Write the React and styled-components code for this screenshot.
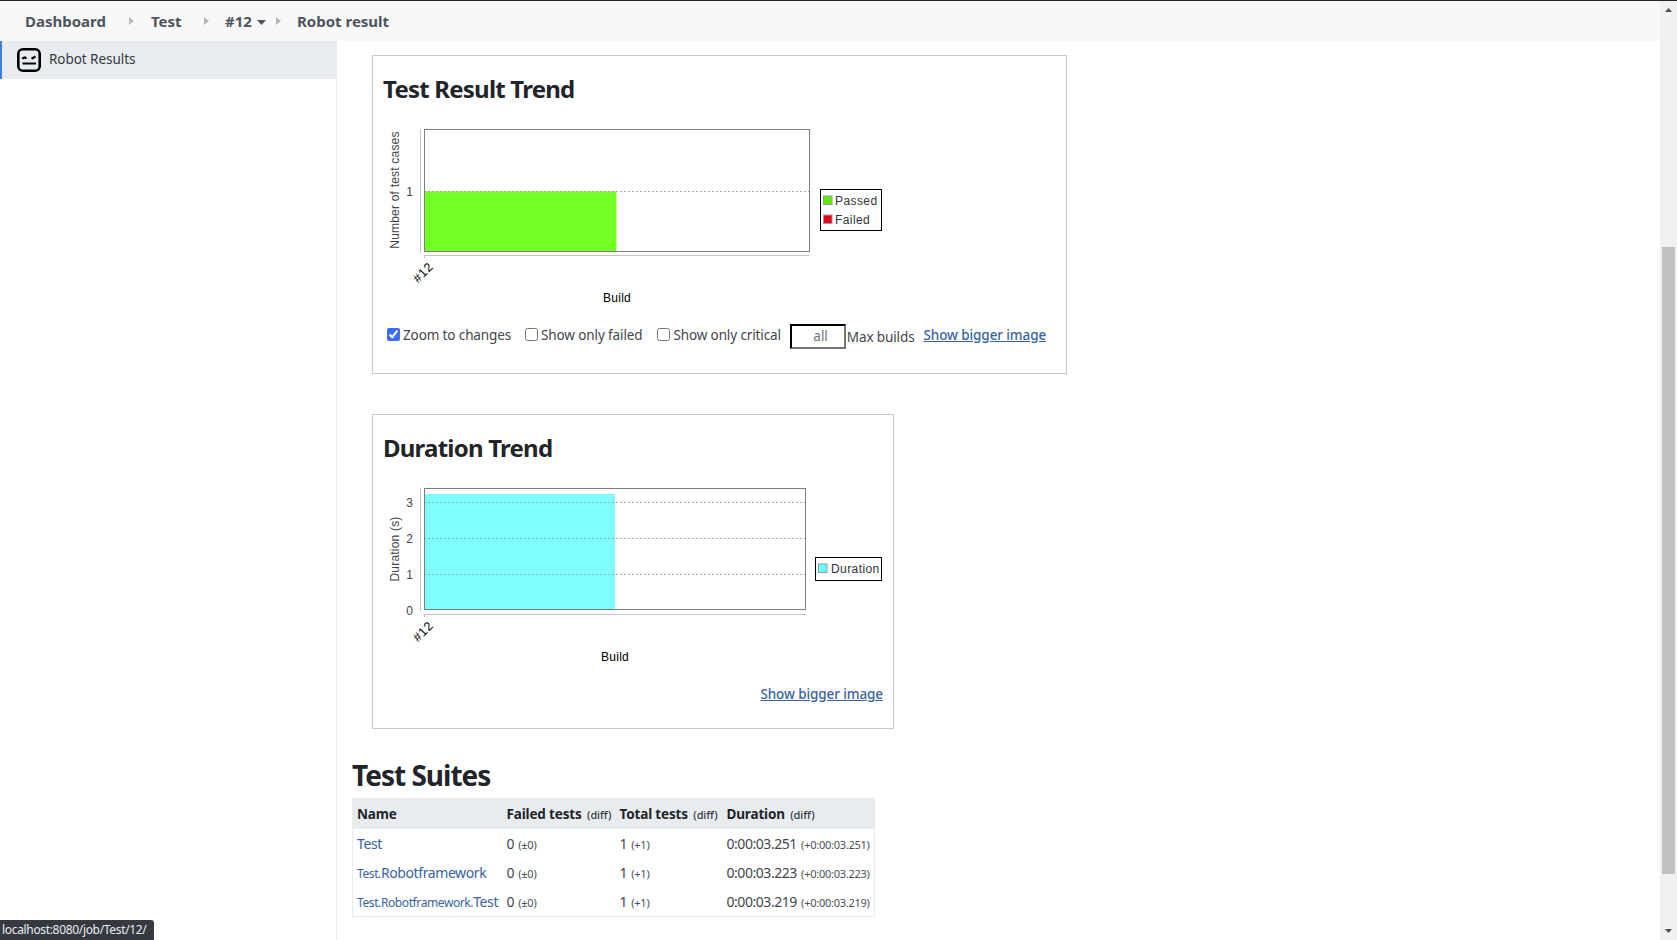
import React from "react";
import styled, { createGlobalStyle } from "styled-components";

const Global = createGlobalStyle`
  html, body { margin: 0; padding: 0; height: 100%; overflow: hidden; background: #fff; }
  body { font-family: "Noto Sans", "Open Sans", sans-serif; color: #212529; }
  * { box-sizing: border-box; }
`;

const Page = styled.div`
  display: grid;
  grid-template-columns: 1fr 17px;
  width: 1677px;
  height: 940px;
  border-top: 1px solid #212529;
  position: relative;
  overflow: hidden;
`;
const Content = styled.div`
  display: flex;
  flex-direction: column;
  min-width: 0;
`;
const Scrollbar = styled.div`
  background: #f1f1f1;
  padding: 246px 2px 66px;
  position: relative;
  display: flex;
`;
const Thumb = styled.div`
  flex: 1;
  background: #c1c1c1;
`;
const Arrow = styled.svg`
  position: absolute;
  left: 5px;
  width: 7px;
  height: 4px;
  top: ${(p) => p.$top}px;
`;
const Crumbs = styled.nav`
  height: 40px;
  background: #f8f8f8;
  display: flex;
  align-items: center;
  padding-left: 25px;
  font-size: 15px;
  font-weight: 700;
  color: #4d545d;
`;
const Crumb = styled.span`
  width: ${(p) => p.$w}px;
  flex: none;
  white-space: nowrap;
`;
const Sep = styled.svg`
  flex: none;
  width: 5px;
  height: 8px;
  margin-left: ${(p) => p.$ml}px;
  margin-right: ${(p) => p.$mr}px;
`;
const Caret = styled.svg`
  width: 9px;
  height: 5px;
  margin-left: 5px;
  vertical-align: 2px;
`;
const Body = styled.div`
  flex: 1;
  display: flex;
  min-height: 0;
`;
const Sidebar = styled.aside`
  width: 337px;
  flex: none;
  border-right: 1px solid #e9ecef;
`;
const SideItem = styled.div`
  height: 38px;
  background: #e9ecef;
  border-left: 2px solid #3d7fe0;
  display: flex;
  align-items: center;
  padding-left: 15px;
  gap: 8px;
  font-size: 13.5px;
  line-height: 36px;
  letter-spacing: -0.05px;
  color: #343a40;
`;
const SideLabel = styled.span`
  margin-top: -2px;
`;
const Main = styled.main`
  flex: 1;
  padding: 14px 0 0 15px;
`;
const Card = styled.section`
  width: ${(p) => p.$w}px;
  height: ${(p) => p.$h}px;
  margin: 0 0 ${(p) => p.$mb}px 20px;
  border: 1px solid #c8c8c8;
  padding: 0 10px;
`;
const CardTitle = styled.h2`
  margin: 0;
  height: 54px;
  padding-top: 16px;
  font-size: 24px;
  line-height: 33px;
  font-weight: 700;
  letter-spacing: -0.78px;
  color: #212529;
  white-space: nowrap;
`;
const ChartSvg = styled.svg`
  display: block;
  overflow: visible;
  font-family: "Liberation Sans", Arial, sans-serif;
`;
const Controls = styled.div`
  display: flex;
  align-items: center;
  height: 28px;
  margin-top: 11px;
  padding-left: 4px;
  font-size: 13.5px;
  letter-spacing: -0.12px;
  color: #3f464c;
  white-space: nowrap;
`;
const Check = styled.label`
  display: flex;
  align-items: center;
  gap: 3px;
  margin-right: ${(p) => p.$mr}px;
`;
const Box = styled.input`
  width: 13px;
  height: 13px;
  margin: -2px 0 0 0;
  accent-color: #3e6cf0;
`;
const MaxInput = styled.input`
  width: 56px;
  height: 25px;
  border: 2px inset #767676;
  border-color: #2b2b2b #767676 #767676 #2b2b2b;
  padding: 0 16px 0 0;
  margin: 2px 1px 0 0;
  text-align: right;
  font: inherit;
  color: #6c757d;
  background: #fff;
`;
const MaxLabel = styled.span`
  margin-top: 4px;
  margin-right: 9px;
`;
const BigLink = styled.a`
  color: #38639f;
  text-decoration: underline;
  font-weight: 500;
  font-size: 13.5px;
  letter-spacing: -0.1px;
`;
const LinkRow = styled.div`
  display: flex;
  justify-content: flex-end;
  height: 24px;
  margin-top: 13px;
  align-items: center;
`;
const SectionTitle = styled.h1`
  margin: 0 0 4px;
  font-size: 28px;
  line-height: 38px;
  font-weight: 700;
  letter-spacing: -1px;
`;
const Table = styled.table`
  width: 522px;
  table-layout: fixed;
  border-collapse: collapse;
  border: 1px solid #e9ecef;
  font-size: 14px;
  letter-spacing: -0.45px;
`;
const Th = styled.th`
  width: ${(p) => p.$w}px;
  height: 30px;
  background: #e9ecef;
  text-align: left;
  padding: 0 0 0 5px;
  font-size: 13.5px;
  font-weight: 700;
  letter-spacing: -0.15px;
  white-space: nowrap;
  &:first-child { padding-left: 4px; }
`;
const Td = styled.td`
  height: ${(p) => p.$h}px;
  padding: 0 0 0 5px;
  color: #3f464c;
  white-space: nowrap;
  &:first-child { letter-spacing: -0.4px; padding-left: 4px; }
`;
const Diff = styled.small`
  font-size: 11px;
  font-weight: 400;
  margin-left: 1px;
  color: #495057;
  letter-spacing: -0.25px;
`;
const HeadDiff = styled(Diff)`
  font-weight: 500;
  color: #343a40;
  margin-left: 2px;
  letter-spacing: -0.1px;
`;
const SuiteLink = styled.a`
  color: #38639f;
  text-decoration: none;
`;
const Parent = styled.span`
  font-size: 12px;
`;
const Tooltip = styled.div`
  position: absolute;
  left: 0;
  bottom: 0;
  width: 154px;
  height: 20px;
  padding-left: 2px;
  background: #343a40;
  border-top-right-radius: 3px;
  color: #e9ecef;
  font-size: 12px;
  line-height: 20px;
  letter-spacing: -0.33px;
  white-space: nowrap;
`;

const RobotIcon = () => (
  <svg width="24" height="24" viewBox="0 0 24 24" fill="none" stroke="#000">
    <rect x="1.3" y="1.3" width="21.4" height="21.4" rx="4.5" strokeWidth="2.6" />
    <path d="M5.5 11c1-2 2.8-2 3.8-.2M18.5 8.5l-4 2.2M5.5 15.5h13.5" strokeWidth="2.2" />
  </svg>
);

const Chevron = ({ ml, mr }) => (
  <Sep $ml={ml} $mr={mr} viewBox="0 0 5 8"><path d="M0 0l5 4-5 4z" fill="#b5b9bd" /></Sep>
);

const Chart = ({ right, barRight, barTop, bottom, top, axisY, ticks, color, yLabel, labelY, legend, legendBox, buildX }) => (
  <ChartSvg width="520" height="200">
    <g fontSize="12" fill="#444">
      <text transform={`translate(16 ${labelY}) rotate(-90)`} textAnchor="middle" letterSpacing="0.2">{yLabel}</text>
      {ticks.map((t) => (
        <text key={t.l} x="26.5" y={t.y + 4.5} textAnchor="middle">{t.l}</text>
      ))}
    </g>
    <rect x="41.5" y={barTop} width={barRight - 41.5} height={bottom - barTop} fill={color} />
    {ticks.filter((t) => t.y < bottom - 2).map((t) => (
      <line key={t.l} x1="41" x2={right} y1={t.y + 0.5} y2={t.y + 0.5} stroke="#888" strokeOpacity="0.7" strokeDasharray="2 2" />
    ))}
    <rect x="41.5" y={top + 0.5} width={right - 41.5} height={bottom - top - 1} fill="none" stroke="#7e7e7e" />
    <path d={`M37.5 ${top} V${bottom + 1}M41 ${axisY + 0.5} H${right}M41.5 ${axisY} v3`} stroke="#c4c4c4" fill="none" />
    <text transform={`translate(43 ${axisY + 20.5}) rotate(-45)`} fontSize="12.5" fill="#000" textAnchor="middle" letterSpacing="0.6">#12</text>
    <text x={buildX} y={axisY + 47} fontSize="12" fill="#000" textAnchor="middle" letterSpacing="0.3">Build</text>
    <rect x={legendBox.x + 0.5} y={legendBox.y + 0.5} width={legendBox.w} height={legendBox.h} fill="#fff" stroke="#000" />
    {legend.map((l) => (
      <g key={l.text}>
        <rect x={l.x + 0.5} y={l.y} width="8.5" height="8.5" fill={l.color} stroke="#999" strokeWidth="1" />
        <text x={l.x + l.dx} y={l.y + 9} fontSize="12" fill="#333" letterSpacing="0.42">{l.text}</text>
      </g>
    ))}
  </ChartSvg>
);

const suites = [
  { parent: "", name: "Test", dur: "0:00:03.251", h: 29 },
  { parent: "Test.", name: "Robotframework", dur: "0:00:03.223", h: 29 },
  { parent: "Test.Robotframework.", name: "Test", dur: "0:00:03.219", h: 30 },
];

export default function App() {
  return (
    <>
      <Global />
      <Page>
        <Content>
          <Crumbs>
            <Crumb $w={81}>Dashboard</Crumb>
            <Chevron ml={23} mr={17} />
            <Crumb $w={31}>Test</Crumb>
            <Chevron ml={22} mr={16} />
            <Crumb $w={44}>#12<Caret viewBox="0 0 9 5"><path d="M0 0h9L4.5 5z" fill="#4d545d" /></Caret></Crumb>
            <Chevron ml={7} mr={16} />
            <Crumb $w={100}>Robot result</Crumb>
          </Crumbs>
          <Body>
            <Sidebar>
              <SideItem><RobotIcon /><SideLabel>Robot Results</SideLabel></SideItem>
            </Sidebar>
            <Main>
              <Card $w={695} $h={319} $mb={40}>
                <CardTitle>Test Result Trend</CardTitle>
                <Chart
                  top={19} bottom={142} right={426.5} barRight={233.5} barTop={81.5} axisY={145}
                  ticks={[{ l: "1", y: 81 }]} color="#72ff23" yLabel="Number of test cases" labelY={80}
                  legendBox={{ x: 437, y: 79, w: 61, h: 41 }}
                  legend={[{ text: "Passed", color: "#5cf000", x: 440, y: 86, dx: 12 }, { text: "Failed", color: "#e8001a", x: 440, y: 105, dx: 12 }]}
                  buildX={234}
                />
                <Controls>
                  <Check $mr={14}><Box type="checkbox" defaultChecked />Zoom to changes</Check>
                  <Check $mr={15}><Box type="checkbox" />Show only failed</Check>
                  <Check $mr={9}><Box type="checkbox" />Show only critical</Check>
                  <MaxInput defaultValue="all" />
                  <MaxLabel>Max builds</MaxLabel>
                  <BigLink href="#">Show bigger image</BigLink>
                </Controls>
              </Card>
              <Card $w={522} $h={315} $mb={27}>
                <CardTitle>Duration Trend</CardTitle>
                <Chart
                  top={19} bottom={141} right={422.5} barRight={232} barTop={25} axisY={145}
                  ticks={[{ l: "3", y: 33 }, { l: "2", y: 69 }, { l: "1", y: 105 }, { l: "0", y: 141 }]}
                  color="#7fffff" yLabel="Duration (s)" labelY={80}
                  legendBox={{ x: 432, y: 88, w: 66, h: 23 }}
                  legend={[{ text: "Duration", color: "#66ffff", x: 435, y: 95, dx: 13 }]}
                  buildX={232}
                />
                <LinkRow><BigLink href="#">Show bigger image</BigLink></LinkRow>
              </Card>
              <SectionTitle>Test Suites</SectionTitle>
              <Table>
                <thead>
                  <tr>
                    <Th $w={149}>Name</Th>
                    <Th $w={113}>Failed tests <HeadDiff>(diff)</HeadDiff></Th>
                    <Th $w={107}>Total tests <HeadDiff>(diff)</HeadDiff></Th>
                    <Th $w={153}>Duration <HeadDiff>(diff)</HeadDiff></Th>
                  </tr>
                </thead>
                <tbody>
                  {suites.map((s) => (
                    <tr key={s.parent + s.name}>
                      <Td $h={s.h}><SuiteLink href="#"><Parent>{s.parent}</Parent>{s.name}</SuiteLink></Td>
                      <Td $h={s.h}>0 <Diff>(±0)</Diff></Td>
                      <Td $h={s.h}>1 <Diff>(+1)</Diff></Td>
                      <Td $h={s.h}>{s.dur} <Diff>(+{s.dur})</Diff></Td>
                    </tr>
                  ))}
                </tbody>
              </Table>
            </Main>
          </Body>
        </Content>
        <Scrollbar>
          <Arrow $top={7} viewBox="0 0 7 4"><path d="M3.5 0L7 4H0z" fill="#505050" /></Arrow>
          <Thumb />
          <Arrow $top={928} viewBox="0 0 7 4"><path d="M0 0h7L3.5 4z" fill="#505050" /></Arrow>
        </Scrollbar>
        <Tooltip>localhost:8080/job/Test/12/</Tooltip>
      </Page>
    </>
  );
}
